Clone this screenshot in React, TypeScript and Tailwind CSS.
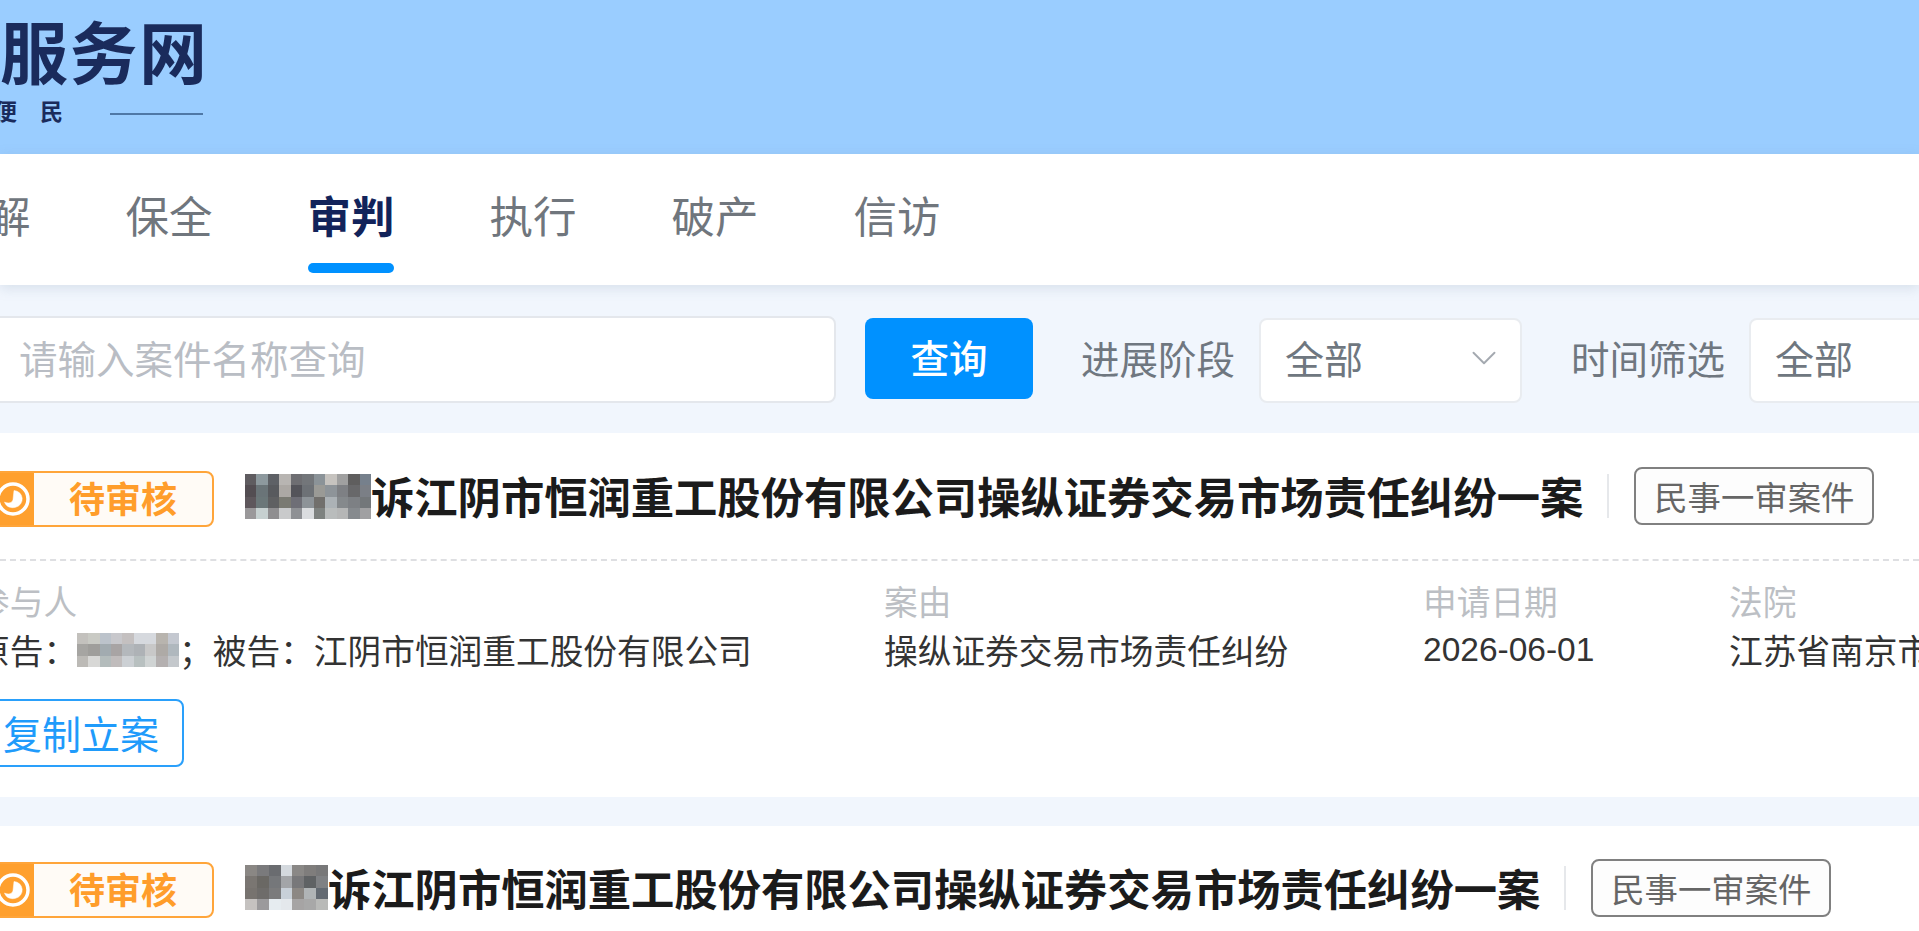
import { ChevronDown } from 'lucide-react';

const font = '[font-family:"Noto_Sans_CJK_SC","Noto_Sans",sans-serif]';

const mosaicOne = [
  ['#5f5c60', '#8d999e', '#5e6166', '#b8b5b2', '#6e6e72', '#73767a', '#8b9398', '#c6c3bf', '#a0a0a0', '#5f5e5e', '#76808c'],
  ['#534d52', '#6a7478', '#585a5e', '#aca8a4', '#54545a', '#6d7176', '#9a9a96', '#8e9499', '#7e8084', '#68686a', '#7b7f86'],
  ['#5e575c', '#6b7779', '#5f6062', '#7a7a72', '#6e6e76', '#8d9398', '#716f6c', '#acb2b6', '#85898c', '#7d8084', '#73777a'],
  ['#9a989a', '#c6d0d0', '#8f8e90', '#c9cacb', '#8e9094', '#dadcdf', '#7e8280', '#b9bcbc', '#b5b6b6', '#868a8e', '#a0a0a2'],
];

const mosaicTwo = [
  ['#8a8784', '#7a7a7c', '#6a6c70', '#d4d9de', '#8a8886', '#7f7d7c', '#787879'],
  ['#7a7672', '#6a6864', '#75777a', '#a3a5a8', '#78787a', '#5f6264', '#7f8184'],
  ['#77736f', '#6e6c6a', '#7b7b7c', '#c8d0d8', '#8c8884', '#b0b4b6', '#636a72'],
  ['#c5c2c0', '#9b9a9c', '#e6ecf0', '#e4e8ec', '#a6a4a4', '#a8a8a8', '#b9bab8'],
];

const mosaicName = [
  ['#c3c1bd', '#c9cac4', '#bcc3cb', '#c8c8cc', '#c4c0c0', '#d6d9de', '#d6d9de', '#b8b4ae', '#c4c8d0'],
  ['#a6a5a2', '#9f9e9b', '#a2abb0', '#a8a4a4', '#b4b8bc', '#aeb2b6', '#c8c8c8', '#aeaaa6', '#b0b8be'],
  ['#bcbab6', '#d8d8d6', '#b4bcbc', '#c0bcbc', '#ccd0d4', '#b8c0c0', '#d0d4d4', '#b4b0b0', '#c4c8cc'],
];

function Mosaic({ cells, className }: { cells: string[][]; className: string }) {
  const cols = cells[0].length;
  const rows = cells.length;
  return (
    <svg
      viewBox={`0 0 ${cols} ${rows}`}
      preserveAspectRatio="none"
      shapeRendering="crispEdges"
      className={`blur-[0.6px] ${className}`}
    >
      {cells.map((row, y) =>
        row.map((fill, x) => <rect key={`${x}-${y}`} x={x} y={y} width={1.02} height={1.02} fill={fill} />)
      )}
    </svg>
  );
}

function StatusBadge() {
  return (
    <div className="mt-[5px] ml-[-20px] flex h-[56px] w-[234px] shrink-0 items-stretch overflow-hidden rounded-lg border-2 border-[#ffa53a] bg-[#fffbf6]">
      <div className="flex w-[52px] shrink-0 items-center justify-end bg-[#ffa02e]">
        <svg viewBox="0 0 34 34" className="mr-[4px] h-[34px] w-[34px]" fill="none" stroke="#fff">
          <circle cx="17" cy="17" r="15" strokeWidth="3.500" />
          <path d="M18 8.500a8.500 8.500 0 0 1 1.500 16.800c-4 1-9 .2-11-5.300 3 1.500 8 1.500 8.500-2.500z" fill="#fff" strokeWidth="0.500" />
        </svg>
      </div>
      <div className="flex flex-1 items-center justify-center pb-[4px] text-[36px] leading-none font-bold text-[#ff9d2b]">
        待审核
      </div>
    </div>
  );
}

function CaseTitle({ mosaic, mosaicWidth }: { mosaic: string[][]; mosaicWidth: string }) {
  return (
    <div className="flex items-center">
      <StatusBadge />
      <Mosaic cells={mosaic} className={`ml-[31px] h-[45px] shrink-0 ${mosaicWidth}`} />
      <h2 className="text-[43.300px] leading-none font-bold whitespace-nowrap text-[#1b1b1b]">
        诉江阴市恒润重工股份有限公司操纵证券交易市场责任纠纷一案
      </h2>
      <div className="ml-[24px] h-[44px] w-[2px] shrink-0 bg-[#e6e8eb]" />
      <div className="ml-[25px] flex h-[58px] w-[240px] shrink-0 items-center justify-center rounded-lg border-2 border-[#808080] bg-[#fdfdfd] text-[33.400px] leading-none text-[#666666]">
        民事一审案件
      </div>
    </div>
  );
}

function Filter({ label, width, margin, chevron }: { label: string; width: string; margin: string; chevron?: boolean }) {
  return (
    <div className={`flex shrink-0 items-center ${margin}`}>
      <span className="pb-[6px] text-[38.500px] leading-none whitespace-nowrap text-[#6f7780]">{label}</span>
      <div
        className={`ml-[24px] flex h-[85px] shrink-0 items-center justify-between rounded-lg border-2 border-[#e9ecf0] bg-white pr-[15px] pl-[24px] ${width}`}
      >
        <span className="pb-[6px] text-[39px] leading-none text-[#6f7780]">全部</span>
        {chevron && <ChevronDown className="mb-[6px] h-[42px] w-[42px] text-[#a4a9b0]" strokeWidth={1.100} />}
      </div>
    </div>
  );
}

export default function App() {
  return (
    <div className={`h-[931px] w-[1919px] overflow-hidden bg-[#f1f6fd] ${font}`}>
      <header className="h-[154px] bg-[#9acdff] pt-[4px] text-[#1a2b5c]">
        <div className="text-[68px] leading-[92px] font-bold tracking-[1.500px]">服务网</div>
        <div className="mt-[3px] flex h-[30px] items-center">
          <span className="mb-[7px] ml-[-6px] text-[23px] leading-none font-bold">便</span>
          <span className="mb-[7px] ml-[23px] text-[23px] leading-none font-bold">民</span>
          <div className="ml-[47px] h-[2px] w-[93px] bg-[#4f78a6]" />
        </div>
      </header>

      <nav className="relative z-10 flex h-[131px] items-start bg-white pt-[35px] text-[43.500px] leading-[52px] text-[#70767d] shadow-[0_3px_12px_rgba(120,140,170,0.22)]">
        <span className="ml-[-13px]">解</span>
        <span className="ml-[95px]">保全</span>
        <div className="ml-[95px] flex w-[87px] flex-col items-center">
          <span className="font-bold text-[#12235a]">审判</span>
          <div className="mt-[22px] h-[10px] w-[86px] rounded-full bg-[#0091ff]" />
        </div>
        <span className="ml-[95px]">执行</span>
        <span className="ml-[95px]">破产</span>
        <span className="ml-[95px]">信访</span>
      </nav>

      <section className="flex h-[148px] items-start pt-[31px]">
        <input
          readOnly
          placeholder="请输入案件名称查询"
          className="ml-[-20px] h-[87px] w-[856px] shrink-0 rounded-lg border-2 border-[#e4e7ec] bg-white pb-[6px] pl-[37px] text-[38.500px] outline-none placeholder:text-[#b9bdc4]"
        />
        <button className="mt-[2px] ml-[29px] flex h-[81px] w-[168px] shrink-0 items-center justify-center rounded-lg bg-[#0091ff] pb-[5px] text-[38.500px] leading-none font-medium text-white">
          查询
        </button>
        <div className="mt-[2px] flex h-[85px] items-center">
          <Filter label="进展阶段" width="w-[263px]" margin="ml-[48px]" chevron />
          <Filter label="时间筛选" width="w-[300px]" margin="ml-[49px]" />
        </div>
      </section>

      <article className="h-[364px] bg-white">
        <div className="flex h-[128px] items-center border-b-2 border-dashed border-[#dedfe2]">
          <CaseTitle mosaic={mosaicOne} mosaicWidth="w-[126px]" />
        </div>
        <div className="ml-[-24px] flex pt-[23px] text-[33.700px] leading-none whitespace-nowrap">
          <div className="w-[908px] shrink-0">
            <div className="text-[#bcbfc4]">参与人</div>
            <div className="mt-[13px] flex h-[38px] items-center text-[#333333]">
              <span>原告：</span>
              <Mosaic cells={mosaicName} className="h-[34px] w-[102px]" />
              <span>；</span>
              <span>被告：江阴市恒润重工股份有限公司</span>
            </div>
          </div>
          <div className="w-[539px] shrink-0">
            <div className="text-[#bcbfc4]">案由</div>
            <div className="mt-[13px] flex h-[38px] items-center text-[#333333]">操纵证券交易市场责任纠纷</div>
          </div>
          <div className="w-[306px] shrink-0">
            <div className="text-[#bcbfc4]">申请日期</div>
            <div className="mt-[13px] flex h-[38px] items-center text-[33.500px] text-[#333333] [font-family:'Liberation_Sans',sans-serif]">
              2026-06-01
            </div>
          </div>
          <div>
            <div className="text-[#bcbfc4]">法院</div>
            <div className="mt-[13px] flex h-[38px] items-center text-[#333333]">江苏省南京市中级人民法院</div>
          </div>
        </div>
        <button className="mt-[30px] ml-[-20px] flex h-[68px] w-[204px] items-center justify-end rounded-lg border-2 border-[#2aa0fb] pr-[23px] text-[39px] leading-none text-[#1f9bfb]">
          复制立案
        </button>
      </article>

      <article className="mt-[29px] h-[200px] bg-white pt-[31px]">
        <CaseTitle mosaic={mosaicTwo} mosaicWidth="w-[83px]" />
      </article>
    </div>
  );
}
